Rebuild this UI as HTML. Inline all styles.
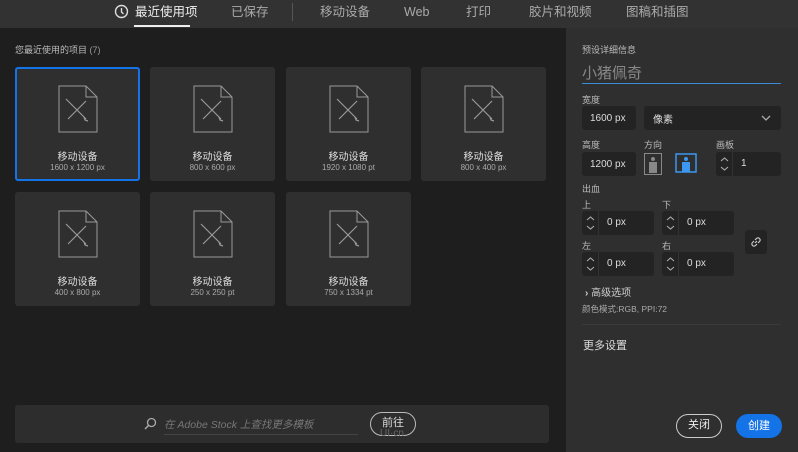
<!DOCTYPE html>
<html><head><meta charset="utf-8"><style>
*{margin:0;padding:0;box-sizing:border-box}
body{width:798px;height:452px;background:#1e1e1e;font-family:"Liberation Sans","Noto Sans CJK SC",sans-serif;color:#ccc;position:relative;overflow:hidden;font-size:12px}
.abs{position:absolute}
.top{left:0;top:0;width:798px;height:28px;background:#323232}
.tab{position:absolute;top:3px;height:18px;line-height:18px;font-size:12.5px;color:#aaa;white-space:nowrap}
.card{position:absolute;width:125px;height:114px;background:#2f2f2f;border-radius:3px}
.card.sel{border:2px solid #1473e6}
.card svg{position:absolute;left:43px;top:18px}
.card .t{position:absolute;left:0;width:100%;top:81px;text-align:center;font-size:10px;color:#ddd}
.card .s{position:absolute;left:0;width:100%;top:96px;text-align:center;font-size:8px;color:#aaa}
.right{left:566px;top:28px;width:232px;height:424px;background:#2f2f2f}
.lbl{position:absolute;font-size:9px;color:#bbb}
.box{position:absolute;background:#232323;border-radius:3px;font-size:10px;color:#ddd;padding-left:8px;display:flex;align-items:center}
.sp{position:absolute;background:#232323;border-radius:3px;font-size:10px;color:#ddd}
.sp .a{position:absolute;left:0;top:0;width:17px;height:100%;border-right:1px solid #333}
.sp .v{position:absolute;left:25px;top:6px}
</style></head><body>
<div class="abs top"></div>
<svg class="abs" style="left:114px;top:4px" width="15" height="15" viewBox="0 0 15 15"><circle cx="7.5" cy="7.5" r="6" fill="none" stroke="#ddd" stroke-width="1.4"/><path d="M7.5 4v4l2 2" fill="none" stroke="#ddd" stroke-width="1.4"/></svg>
<div class="tab" style="left:135px;color:#eee">最近使用项</div>
<div class="abs" style="left:134px;top:25px;width:56px;height:2px;background:#eee"></div>
<div class="tab" style="left:231px">已保存</div>
<div class="abs" style="left:292px;top:3px;width:1px;height:18px;background:#555"></div>
<div class="tab" style="left:320px">移动设备</div>
<div class="tab" style="left:404px">Web</div>
<div class="tab" style="left:466px">打印</div>
<div class="tab" style="left:529px">胶片和视频</div>
<div class="tab" style="left:626px">图稿和插图</div>

<div class="abs" style="left:15px;top:43px;font-size:9px;color:#bbb">您最近使用的项目 <span style="color:#999">(7)</span></div>

<div class="card sel" style="left:15px;top:67px"></div>
<div class="card" style="left:150px;top:67px"></div>
<div class="card" style="left:286px;top:67px"></div>
<div class="card" style="left:421px;top:67px"></div>
<div class="card" style="left:15px;top:192px"></div>
<div class="card" style="left:150px;top:192px"></div>
<div class="card" style="left:286px;top:192px"></div>

<div id="cc"></div>
<script>
var d=[[15,67,"1600 x 1200 px"],[150,67,"800 x 600 px"],[286,67,"1920 x 1080 pt"],[421,67,"800 x 400 px"],[15,192,"400 x 800 px"],[150,192,"250 x 250 pt"],[286,192,"750 x 1334 pt"]];
var h="";d.forEach(function(c){h+='<div class="card" style="left:'+c[0]+'px;top:'+c[1]+'px;background:transparent"><svg width="40" height="48" viewBox="0 0 40 48"><path d="M1 1h27l11 11v35H1z M28 1v11h11" fill="none" stroke="#999" stroke-width="1"/><path d="M10 16l18 18M28 16l-18 18M8 14l4 4M30 36l-3-1-1-3" fill="none" stroke="#999" stroke-width="1.2"/></svg><div class="t">移动设备</div><div class="s">'+c[2]+'</div></div>'});
document.getElementById("cc").innerHTML=h;
var sv='<svg width="17" height="24" viewBox="0 0 17 24"><path d="M5 9l3.5-3 3.5 3M5 15l3.5 3 3.5-3" fill="none" stroke="#aaa" stroke-width="1.1"/></svg>';
setTimeout(function(){},0);
document.addEventListener("DOMContentLoaded",function(){document.querySelectorAll(".sp .a").forEach(function(e){e.innerHTML=sv})});
</script>

<div class="abs" style="left:15px;top:405px;width:534px;height:38px;background:#2d2d2d;border-radius:3px"></div>
<svg class="abs" style="left:143px;top:417px" width="14" height="14" viewBox="0 0 14 14"><circle cx="8.5" cy="5.5" r="4" fill="none" stroke="#aaa" stroke-width="1.3"/><path d="M5.5 8.5L2 12" stroke="#aaa" stroke-width="1.5"/></svg>
<div class="abs" style="left:164px;top:417px;font-size:10.5px;color:#777;font-style:italic">在 Adobe Stock 上查找更多模板</div>
<div class="abs" style="left:164px;top:434px;width:194px;height:1px;background:#444"></div>
<div class="abs" style="left:370px;top:412px;width:46px;height:24px;border:1.5px solid #bbb;border-radius:12px;text-align:center;line-height:21px;font-size:11px;color:#ddd">前往</div>
<div class="abs" style="left:380px;top:428px;font-size:10px;color:#666">UI·cn</div>

<div class="abs right"></div>
<div class="lbl" style="left:582px;top:43px">预设详细信息</div>
<div class="abs" style="left:582px;top:62px;font-size:15px;color:#888">小猪佩奇</div>
<div class="abs" style="left:582px;top:83px;width:199px;height:1px;background:#3b8ad6"></div>
<div class="lbl" style="left:582px;top:93px">宽度</div>
<div class="box" style="left:582px;top:106px;width:54px;height:24px">1600 px</div>
<div class="box" style="left:644px;top:106px;width:137px;height:24px;padding-left:9px">像素<svg style="position:absolute;right:10px;top:9px" width="10" height="7" viewBox="0 0 10 7"><path d="M1 1l4 4 4-4" fill="none" stroke="#aaa" stroke-width="1.3"/></svg></div>
<div class="lbl" style="left:582px;top:138px">高度</div>
<div class="lbl" style="left:644px;top:138px">方向</div>
<div class="lbl" style="left:716px;top:138px">画板</div>
<div class="box" style="left:582px;top:152px;width:54px;height:24px">1200 px</div>
<svg class="abs" style="left:644px;top:153px" width="18" height="22" viewBox="0 0 18 22"><rect x="0.5" y="0.5" width="17" height="21" fill="none" stroke="#888"/><circle cx="9" cy="6" r="2" fill="#888"/><rect x="5" y="9" width="8" height="11" fill="#888"/></svg>
<svg class="abs" style="left:675px;top:153px" width="22" height="20" viewBox="0 0 22 20"><rect x="1" y="1" width="20" height="18" fill="none" stroke="#3b97f0" stroke-width="1.5"/><circle cx="11" cy="6" r="2" fill="#3b97f0"/><rect x="7" y="9" width="8" height="10" fill="#3b97f0"/></svg>
<div class="sp" style="left:716px;top:152px;width:65px;height:24px"><div class="a"></div><div class="v">1</div></div>
<div class="lbl" style="left:582px;top:182px">出血</div>
<div class="lbl" style="left:582px;top:198px">上</div>
<div class="lbl" style="left:662px;top:198px">下</div>
<div class="sp" style="left:582px;top:211px;width:72px;height:24px"><div class="a"></div><div class="v">0 px</div></div>
<div class="sp" style="left:662px;top:211px;width:72px;height:24px"><div class="a"></div><div class="v">0 px</div></div>
<div class="lbl" style="left:582px;top:239px">左</div>
<div class="lbl" style="left:662px;top:239px">右</div>
<div class="sp" style="left:582px;top:252px;width:72px;height:24px"><div class="a"></div><div class="v">0 px</div></div>
<div class="sp" style="left:662px;top:252px;width:72px;height:24px"><div class="a"></div><div class="v">0 px</div></div>
<div class="abs" style="left:745px;top:230px;width:22px;height:24px;background:#232323;border-radius:3px"></div>
<svg class="abs" style="left:750px;top:236px" width="12" height="12" viewBox="0 0 12 12"><path d="M5 7l2-2M4 5L2.5 6.5a2 2 0 0 0 3 3L7 8M8 7l1.5-1.5a2 2 0 0 0-3-3L5 4" fill="none" stroke="#ccc" stroke-width="1.2"/></svg>
<div class="abs" style="left:585px;top:284px;font-size:10px;color:#ccc"><span style="font-weight:bold">›</span> 高级选项</div>
<div class="lbl" style="left:582px;top:303px;font-size:8.5px;color:#aaa">颜色模式:RGB, PPI:72</div>
<div class="abs" style="left:582px;top:324px;width:199px;height:1px;background:#3a3a3a"></div>
<div class="abs" style="left:583px;top:337px;font-size:11px;color:#ddd">更多设置</div>
<div class="abs" style="left:676px;top:414px;width:46px;height:24px;border:1.5px solid #ccc;border-radius:12px;text-align:center;line-height:21px;font-size:11px;color:#eee">关闭</div>
<div class="abs" style="left:736px;top:414px;width:46px;height:24px;background:#1473e6;border-radius:12px;text-align:center;line-height:24px;font-size:11px;color:#fff">创建</div>
<script>document.querySelectorAll(".sp .a").forEach(function(e){e.innerHTML=sv});</script>
</body></html>
